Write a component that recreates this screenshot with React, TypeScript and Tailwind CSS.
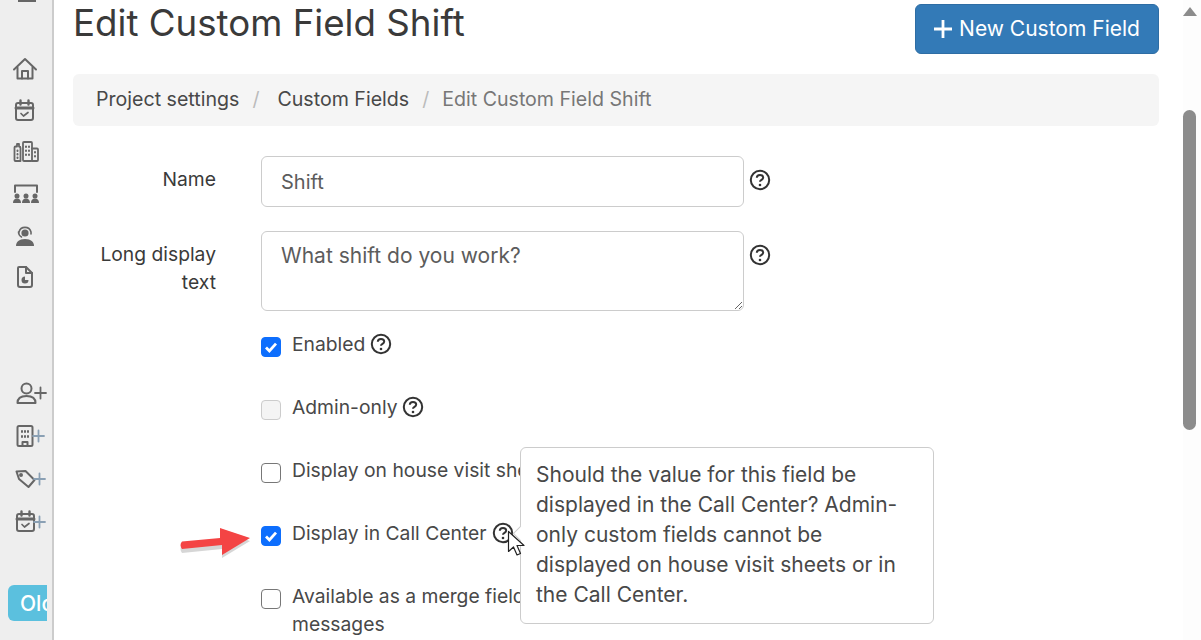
import React from "react";

const Help = () => (
  <svg width="22" height="22" viewBox="0 0 22 22" fill="none" className="shrink-0">
    <circle cx="11" cy="11" r="9.200" stroke="#333" strokeWidth="2" />
    <path d="M7.800 8.800c0-1.800 1.400-2.900 3.200-2.900s3.200 1.100 3.200 2.700c0 2.300-3.200 2.200-3.200 4.200" stroke="#333" strokeWidth="2" fill="none" />
    <circle cx="11" cy="16" r="1.300" fill="#333" />
  </svg>
);

const S = ({ children, w = 26 }: { children: React.ReactNode; w?: number }) => (
  <svg width={w} height="26" viewBox={`0 0 ${w} 26`} fill="none" stroke="#666" strokeWidth="2" strokeLinejoin="round" strokeLinecap="round">
    {children}
  </svg>
);

const Plus = ({ x, c = "#8aa0b4" }: { x: number; c?: string }) => (
  <path d={`M${x} 13h11M${x + 5.5} 7.500v11`} stroke={c} strokeWidth="1.800" />
);

const Cal = () => (
  <>
    <rect x="2" y="5" width="17" height="17" rx="2" />
    <path d="M2 10h17" strokeWidth="3" />
    <path d="M6.500 2.500v4M14.500 2.500v4" strokeWidth="2.400" />
    <path d="M7 15.500l2.500 2.500 4.500-3.500" strokeWidth="1.700" />
  </>
);

const Check = ({ checked, disabled }: { checked?: boolean; disabled?: boolean }) => (
  <span
    className={
      "flex h-5 w-5 shrink-0 items-center justify-center rounded-[4px] border " +
      (checked ? "border-[#0d6efd] bg-[#0d6efd]" : disabled ? "border-[#ccc] bg-[#f4f4f4]" : "border-[#777] bg-white")
    }
  >
    {checked && (
      <svg width="14" height="14" viewBox="0 0 14 14" fill="none">
        <path d="M2 7.500l3.400 3.400L12 3.600" stroke="#fff" strokeWidth="2.800" />
      </svg>
    )}
  </span>
);

const CheckRow = ({
  label, checked, disabled, help,
}: { label: React.ReactNode; checked?: boolean; disabled?: boolean; help?: boolean }) => (
  <div className="flex h-[63px] gap-[11px]">
    <Check checked={checked} disabled={disabled} />
    <div className="flex items-start gap-[5px] text-[19.300px] leading-[28px] text-[#484848]">
      <span className="-mt-[7px]">{label}</span>
      {help && <span className="-mt-[4px]"><Help /></span>}
    </div>
  </div>
);

export default function App() {
  return (
    <div className="relative flex h-[640px] w-[1201px] overflow-hidden bg-white font-['Inter',sans-serif]">
      <aside className="flex h-full w-[54px] shrink-0 flex-col items-start border-r-2 border-[#ccc] bg-[#eeeeee]">
        <div className="ml-[18px] h-[2px] w-[18px] bg-[#666]" />
        <div className="mt-[54px] flex flex-col gap-[15.700px] pl-[12px]">
          <S>
            <path d="M2 13.500L13 3l11 10.500" />
            <path d="M5.500 11.500V22.500h15V11.500" />
            <path d="M10 22.500V15h6v7.500" />
          </S>
          <S><g transform="translate(2 0)"><Cal /></g></S>
          <S w={28}>
            <path d="M2.500 8.500a1 1 0 0 1 1-1H5V5h2v2.500a1.500 1.500 0 0 1 1.500 1.500V22H3.500a1 1 0 0 1-1-1z" strokeWidth="1.800" />
            <rect x="11" y="3" width="9" height="19" rx="1" strokeWidth="1.800" />
            <path d="M20 9.500h5a1 1 0 0 1 1 1V21a1 1 0 0 1-1 1h-5" strokeWidth="1.800" />
            <path d="M5.500 11.500v.5M5.500 15v.5M5.500 18.500v.5M14 7.500v.5M17 7.500v.5M14 11.500v.5M17 11.500v.5M14 15.500v.5M17 15.500v.5M23 13v.5M23 17v.5" />
          </S>
          <S w={28}>
            <path d="M3 11V4.500h22V11" />
            <g fill="#666" stroke="none">
              <circle cx="5" cy="15" r="2.500" /><circle cx="14" cy="15" r="2.500" /><circle cx="23" cy="15" r="2.500" />
              <path d="M1 22c0-3 1.500-4.500 4-4.500S9 19 9 22zM10 22c0-3 1.500-4.500 4-4.500s4 1.500 4 4.500zM19 22c0-3 1.500-4.500 4-4.500s4 1.500 4 4.500z" />
            </g>
          </S>
          <S>
            <path d="M7 9a6.200 6.200 0 0 1 12 0v2" strokeWidth="1.600" />
            <path d="M9.500 14a6 6 0 0 1-3-5" strokeWidth="1.600" />
            <circle cx="13" cy="10" r="3.600" fill="#666" stroke="none" />
            <path d="M4 23c0-4 3-7 9-7s9 3 9 7z" fill="#666" stroke="none" />
          </S>
          <S>
            <path d="M7 3h7l6 6v12a2 2 0 0 1-2 2H8a2 2 0 0 1-2-2V4a1 1 0 0 1 1-1z" />
            <path d="M14 3v6h6" />
            <path d="M13 12.500a3.500 3.500 0 1 0 3.500 3.500H13z" fill="#666" stroke="none" />
          </S>
        </div>
        <div className="mt-[90px] flex flex-col gap-[17px] pl-[15px]">
          <S w={32}>
            <circle cx="11.500" cy="8.500" r="5" />
            <path d="M2.500 23c0-5 3-7 9-7s9 2 9 7z" />
            <Plus x={20} c="#666" />
          </S>
          <S w={32}>
            <rect x="2.500" y="3" width="15" height="20" rx="1.500" />
            <path d="M7 8v1M10 8v1M13 8v1M7 13v1M10 13v1M13 13v1M7.500 23v-4h5v4" />
            <Plus x={18} />
          </S>
          <S w={32}>
            <path d="M1.500 5.500l9-.5 9 9-6 7-9.500-8z" />
            <circle cx="6" cy="9" r="1" fill="#666" />
            <Plus x={19} />
          </S>
          <S w={32}>
            <Cal />
            <Plus x={19} />
          </S>
        </div>
        <div className="mt-[50px] ml-[8px] flex h-9 w-[39px] items-center overflow-hidden rounded-l-[6px] bg-[#5bc0de] pl-[12px] text-[21px] font-medium text-white">
          Old
        </div>
      </aside>

      <main className="min-w-0 flex-1 pl-[19px]">
        <div className="w-[1086px]">
          <div className="flex h-[74px] items-start justify-between">
            <h1 className="text-[36.700px] leading-[46px] text-[#3a3a3a]">Edit Custom Field Shift</h1>
            <button className="mt-1 flex h-[50px] w-[244px] items-center justify-center gap-[7px] rounded-[6px] border border-[#2e6da4] bg-[#337ab7] text-[21px] text-white">
              <svg width="18" height="18" viewBox="0 0 18 18"><path d="M9 0v18M0 9h18" stroke="#fff" strokeWidth="2.800" /></svg>
              New Custom Field
            </button>
          </div>
          <nav className="flex h-[52px] items-center rounded-[6px] bg-[#f5f5f5] pl-[23px] text-[19.600px]">
            <span className="text-[#484848]">Project settings</span>
            <span className="ml-[13px] mr-[18px] text-[#bbb]">/</span>
            <span className="text-[#484848]">Custom Fields</span>
            <span className="ml-[13px] mr-[13px] text-[#bbb]">/</span>
            <span className="text-[#777]">Edit Custom Field Shift</span>
          </nav>

          <div className="mt-[30px] flex h-[75px] items-start">
            <label className="mt-[9px] w-[143px] text-right text-[19.300px] leading-[28px] text-[#3a3a3a]">Name</label>
            <input
              readOnly
              value="Shift"
              className="ml-[45px] h-[51px] w-[483px] rounded-[6px] border border-[#ccc] bg-white px-[19px] text-[20px] text-[#5c5c5c] outline-none"
            />
            <span className="mt-[13px] ml-[5px]"><Help /></span>
          </div>
          <div className="flex h-[106px] items-start">
            <label className="w-[143px] pt-[9px] text-right text-[19.300px] leading-[28px] text-[#3a3a3a]">Long display text</label>
            <textarea
              readOnly
              value="What shift do you work?"
              className="ml-[45px] h-[80px] w-[483px] rounded-[6px] border border-[#ccc] bg-white px-[19px] pt-[10px] text-[21px] leading-[28px] text-[#5c5c5c] outline-none"
            />
            <span className="mt-[13px] ml-[5px]"><Help /></span>
          </div>
          <div className="ml-[188px]">
            <CheckRow label="Enabled" checked help />
            <CheckRow label="Admin-only" disabled help />
            <CheckRow label="Display on house visit sheets" />
            <CheckRow label="Display in Call Center" checked help />
            <CheckRow label={<>Available as a merge field in<br />messages</>} />
          </div>
        </div>
      </main>

      <div className="w-[18px] shrink-0 bg-[#fdfdfd] pr-[5px]">
        <div className="mx-auto mt-[7px] h-0 w-0 border-x-[7px] border-b-[9px] border-x-transparent border-b-[#8c8c8c]" />
        <div className="mx-auto mt-[94px] h-[320px] w-[13px] rounded-full bg-[#8c8c8c]" />
      </div>

      {/* Tooltip */}
      <div className="absolute left-[520px] top-[447px] z-10 h-[177px] w-[414px] rounded-[6px] border border-[#ccc] bg-white py-[12px] pl-[15px] pr-[20px] text-[21px] leading-[30px] text-[#484848]">
        Should the value for this field be displayed in the Call Center? Admin-only custom fields cannot be displayed on house visit sheets or in the Call Center.
        <span className="absolute -left-[6px] top-[80px] h-[11px] w-[11px] rotate-45 border-b border-l border-[#ccc] bg-white" />
      </div>

      {/* Cursor */}
      <svg className="absolute left-[507px] top-[530px] z-20" width="20" height="28" viewBox="0 0 20 28">
        <path d="M1.500 1.500v20l5-4.500 3.500 8 3.500-1.500-3.500-8h7z" fill="#fff" stroke="#222" strokeWidth="1.200" strokeLinejoin="round" />
      </svg>

      {/* Annotation arrow */}
      <svg className="absolute left-[176px] top-[524px] z-20" width="78" height="40" viewBox="0 0 78 40">
        <path d="M6 19L44 15V5L74 15 46 32V23L6 27Q3 23 6 19z" fill="#777" opacity="0.3" transform="translate(0 2)" />
        <path d="M6 17.500L44 14V4L74 14 46 31V21L6 25Q3 21 6 17.500z" fill="#f44444" />
      </svg>
    </div>
  );
}
